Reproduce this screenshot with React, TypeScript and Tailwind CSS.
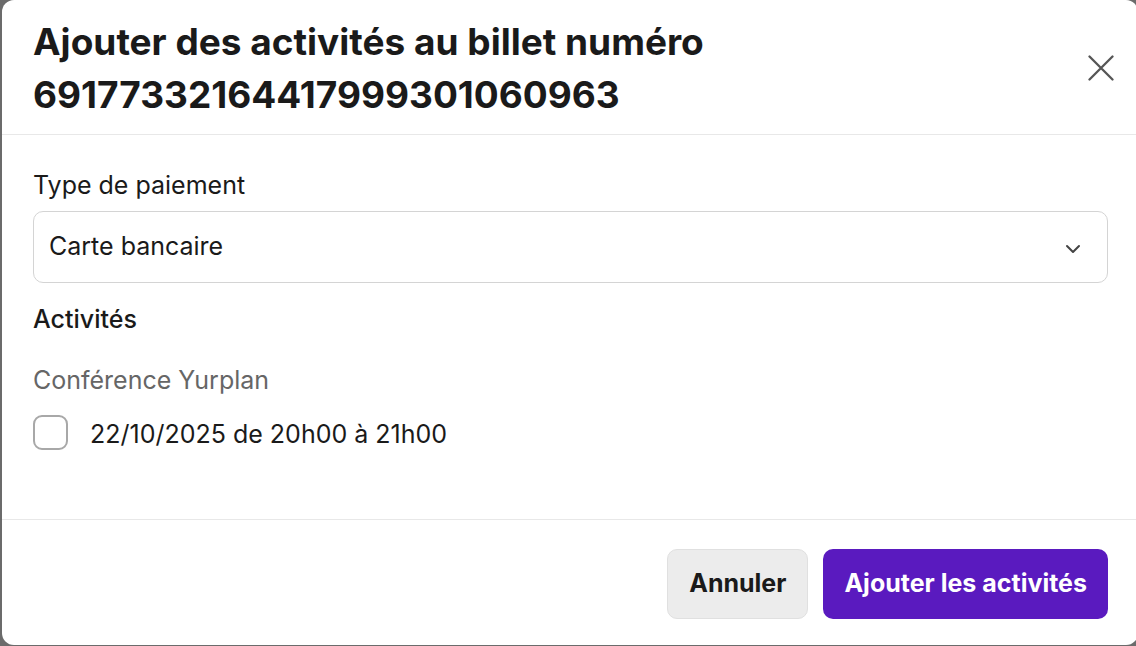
import { ChevronDown } from 'lucide-react';

export default function App() {
  return (
    <div className="w-[1136px] h-[646px] bg-[#6b6b6b] overflow-hidden pl-[2px]" style={{ fontFamily: 'Inter, "Noto Sans", sans-serif' }}>
      <div className="w-[1136px] h-[645px] bg-white rounded-[12px] flex flex-col text-[#1a1a1a]">
        {/* Header */}
        <div className="flex items-start justify-between pl-[31px] pr-[24px] pt-[15px] pb-[13px] border-b border-[#e8e8e8]">
          <h2 className="text-[37px] leading-[53px] font-bold">
            Ajouter des activités au billet numéro
            <br />
            69177332164417999301060963
          </h2>
          <button className="mt-[40px] text-[#555]">
            <svg width="26" height="26" viewBox="0 0 26 26" fill="none" stroke="currentColor" strokeWidth="2.3" strokeLinecap="round">
              <path d="M1.5 1.5 24.5 24.5M24.5 1.5 1.5 24.5" />
            </svg>
          </button>
        </div>

        {/* Body */}
        <div className="flex-1 px-[31px] pt-[35px]">
          <label className="block text-[25px] leading-[30px] mb-[11px]">Type de paiement</label>
          <div className="h-[72px] w-[1075px] rounded-[10px] border border-[#d4d4d4] flex items-center justify-between pl-[15px] pr-[22px] text-[25px]">
            <span>Carte bancaire</span>
            <ChevronDown className="w-[24px] h-[24px] text-[#444] mt-[4px]" strokeWidth={2} />
          </div>
          <div className="mt-[21px] text-[25px] leading-[30px] font-medium">Activités</div>
          <div className="mt-[31px] text-[25px] leading-[30px] text-[#666]">Conférence Yurplan</div>
          <label className="mt-[20px] flex items-center gap-[22px]">
            <span className="w-[35px] h-[35px] rounded-[9px] border-2 border-[#a8a8a8] bg-white" />
            <span className="text-[25px] leading-[30px] mt-[3px]">22/10/2025 de 20h00 à 21h00</span>
          </label>
        </div>

        {/* Footer */}
        <div className="border-t border-[#e8e8e8] flex justify-end gap-[15px] pr-[30px] pt-[29px] pb-[26px]">
          <button className="h-[70px] px-[21px] rounded-[10px] bg-[#ececec] border border-[#e0e0e0] text-[25px] font-bold">Annuler</button>
          <button className="h-[70px] px-[21px] rounded-[10px] bg-[#5a1abf] text-white text-[25px] font-bold">Ajouter les activités</button>
        </div>
      </div>
    </div>
  );
}
